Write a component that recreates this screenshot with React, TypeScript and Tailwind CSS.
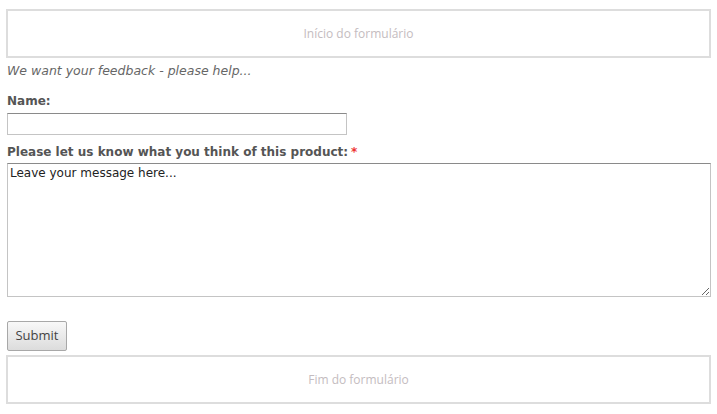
// Formulário de feedback: caixa de início, campos e caixa de fim.
export default function App() {
  return (
    <div className="min-h-[414px] w-[717px] bg-white text-[#555] [font-family:'DejaVu_Sans',sans-serif]">
      <div className="px-[6px] pt-[9px]">
        <div className="flex h-[49px] items-center justify-center border-2 border-[#ddd] text-[12px] text-[#c4bcc0] [font-family:'Open_Sans',sans-serif]">
          Início do formulário
        </div>
      </div>
      <form className="px-[7px]" onSubmit={(e) => e.preventDefault()}>
        <p className="mt-[5px] text-[12.5px] italic leading-[16px] text-[#666]">
          We want your feedback - please help...
        </p>
        <label className="mt-[14px] block text-[12px] font-bold leading-[16px]">Name:</label>
        <input
          type="text"
          className="mt-[4px] block h-[22px] w-[340px] border border-[#c4c4c4] border-t-[#8a8a8a] bg-white"
        />
        <label className="mt-[9px] block text-[12px] font-bold leading-[16px]">
          Please let us know what you think of this product:<span className="ml-[3px] text-[#e33]">*</span>
        </label>
        <textarea
          defaultValue="Leave your message here..."
          className="mt-[3px] block h-[134px] w-[704px] resize border border-[#c4c4c4] border-t-[#8a8a8a] px-[2px] py-[1px] text-[12px] leading-[16px] text-[#222]"
        />
        <button
          type="submit"
          className="mt-[24px] block h-[30px] w-[60px] rounded-[2px] border border-[#a8a8a8] bg-gradient-to-b from-[#f8f8f8] to-[#dcdcdc] text-[13px] text-[#444] [font-family:'Open_Sans',sans-serif]"
        >
          Submit
        </button>
      </form>
      <div className="px-[6px] pt-[4px]">
        <div className="flex h-[49px] items-center justify-center border-2 border-[#ddd] text-[12px] text-[#c4bcc0] [font-family:'Open_Sans',sans-serif]">
          Fim do formulário
        </div>
      </div>
    </div>
  );
}
